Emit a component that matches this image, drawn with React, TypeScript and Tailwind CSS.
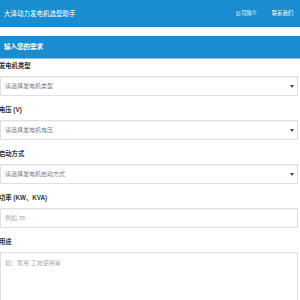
import * as React from "react"

const fieldBox =
  "h-[20px] w-full border border-[#e0e0e0] bg-white flex items-center px-[4px] text-[6px] text-[#808080] shadow-[inset_0_1px_1px_rgba(0,0,0,0.05)]"

const labelCls = "h-[10px] mb-[5px] -ml-[1px] flex items-center text-[6.3px] text-[#333] font-semibold"

const SelectField = ({ label, placeholder }: { label: string; placeholder: string }) => (
  <div className="mb-[9px]">
    <div className={labelCls}>{label}</div>
    <div className={fieldBox + " justify-between"}>
      <span>{placeholder}</span>
      <svg width="4" height="3" viewBox="0 0 4 3" className="mr-[-1px]">
        <polygon points="0,0 4,0 2,3" fill="#444" />
      </svg>
    </div>
  </div>
)

export default function App() {
  return (
    <div
      className="w-[300px] h-[300px] overflow-hidden bg-white"
      style={{ fontFamily: '"Liberation Sans", "Noto Sans CJK SC", sans-serif' }}
    >
      {/* Top bar */}
      <div className="h-[27px] bg-[#1a8dd0] flex items-center justify-between pl-[4px] pr-[7px]">
        <span className="text-[6.5px] text-white">大泽动力发电机选型助手</span>
        <div className="flex items-center gap-[15px] text-[5.3px] text-white">
          <span>公司简介</span>
          <span>联系我们</span>
        </div>
      </div>

      <div className="h-[9px]" />

      {/* Card header */}
      <div className="h-[23px] bg-[#1a8dd0] border-b border-[#82c4ea] flex items-center px-[4px]">
        <span className="text-[6.5px] font-bold text-white">输入您的需求</span>
      </div>

      {/* Form */}
      <div className="pt-[2px] pr-[2px]">
        <SelectField label="发电机类型" placeholder="请选择发电机类型" />
        <SelectField label="电压 (V)" placeholder="请选择发电机电压" />
        <SelectField label="启动方式" placeholder="请选择发电机启动方式" />

        <div className="mb-[9px]">
          <div className={labelCls}>功率 (KW、KVA)</div>
          <div className={fieldBox}>
            <span className="text-[#aaa]">例如 35</span>
          </div>
        </div>

        <div>
          <div className={labelCls}>用途</div>
          <div className="h-[70px] w-full border border-[#e0e0e0] bg-white px-[4px] pt-[6px] text-[6px] text-[#aaa]">
            如：家用 工地使用等
          </div>
        </div>
      </div>
    </div>
  )
}
